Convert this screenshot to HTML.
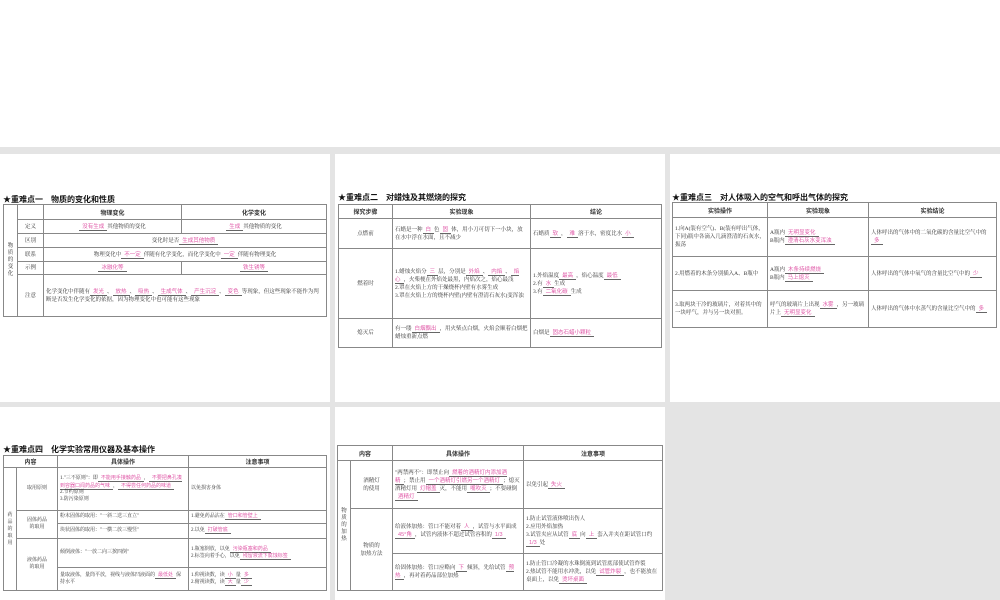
<!DOCTYPE html>
<html><head><meta charset="utf-8"><style>
html,body{margin:0;width:1000px;height:600px;overflow:hidden}
#w{position:relative;width:1000px;height:600px;overflow:hidden;background:#e4e4e4;font-family:"Liberation Serif","Noto Serif CJK SC","Noto Sans CJK SC",serif;color:#333}
.p{position:absolute;background:#fff}
.t{position:absolute;font:bold 8px "Liberation Sans","Noto Sans CJK SC",sans-serif;color:#111}
table{position:absolute;border-collapse:collapse;table-layout:fixed;font-size:5.5px;line-height:8px}
td{border:1px solid #888;padding:0 2px;vertical-align:middle;overflow:hidden}
th{border:1px solid #888;font:bold 6px "Liberation Sans","Noto Sans CJK SC",sans-serif;background:#fff}
table.o{border:1.5px solid #666}
.k{color:#e05aa8;border-bottom:0.6px solid #666;padding:0 3px;font-family:"Liberation Sans","Noto Sans CJK SC",sans-serif}
.c{text-align:center}
.v{text-align:center;line-height:7px}
table.s{font-size:5px;line-height:6.5px}
.clip{position:absolute;overflow:hidden}
</style></head><body><div id="w">
<div class="p" style="left:0;top:0;width:1000px;height:147px"></div>
<div class="p" style="left:0;top:154px;width:330px;height:248px"></div>
<div class="p" style="left:335px;top:154px;width:330px;height:248px"></div>
<div class="p" style="left:670px;top:154px;width:330px;height:248px"></div>
<div class="p" style="left:0;top:407px;width:330px;height:193px"></div>
<div class="p" style="left:335px;top:407px;width:330px;height:193px"></div>

<div class="t" style="left:3px;top:194px">★重难点一　物质的变化和性质</div>
<table class="o" style="left:3px;top:204px;width:324px">
<colgroup><col style="width:14px"><col style="width:26px"><col style="width:138px"><col></colgroup>
<tr style="height:15px"><td rowspan="6" class="v" style="padding:0">物<br>质<br>的<br>变<br>化</td><td></td><th>物理变化</th><th>化学变化</th></tr>
<tr style="height:14px"><td class="c">定义</td><td class="c"><span class="k">没有生成</span>其他物质的变化</td><td class="c"><span class="k">生成</span>其他物质的变化</td></tr>
<tr style="height:14px"><td class="c">区别</td><td colspan="2" class="c">变化时是否<span class="k">生成其他物质</span></td></tr>
<tr style="height:14px"><td class="c">联系</td><td colspan="2" class="c">物理变化中<span class="k">不一定</span>伴随有化学变化，而化学变化中<span class="k">一定</span>伴随有物理变化</td></tr>
<tr style="height:13px"><td class="c">示例</td><td class="c"><span class="k">冰融化等</span></td><td class="c"><span class="k">铁生锈等</span></td></tr>
<tr style="height:42px"><td class="c">注意</td><td colspan="2">化学变化中伴随有<span class="k">发光</span>、<span class="k">放热</span>、<span class="k">吸热</span>、<span class="k">生成气体</span>、<span class="k">产生沉淀</span>、<span class="k">变色</span>等现象，但这些现象不能作为判断是否发生化学变化的依据，因为物理变化中也可能有这些现象</td></tr>
</table>

<div class="t" style="left:338px;top:192px">★重难点二　对蜡烛及其燃烧的探究</div>
<table class="o" style="left:338px;top:204px;width:324px">
<colgroup><col style="width:54px"><col style="width:138px"><col></colgroup>
<tr style="height:14px"><th>探究步骤</th><th>实验现象</th><th>结论</th></tr>
<tr style="height:30px"><td class="c">点燃前</td><td>石蜡是一种<span class="k">白</span>色<span class="k">固</span>体，用小刀可切下一小块，放在水中浮在水面，且不减少</td><td>石蜡质<span class="k">软</span>，<span class="k">难</span>溶于水，密度比水<span class="k">小</span></td></tr>
<tr style="height:70px"><td class="c">燃着时</td><td>1.蜡烛火焰分<span class="k">三</span>层，分别是<span class="k">外焰</span>、<span class="k">内焰</span>、<span class="k">焰心</span>，火柴梗在外焰处最黑，内焰次之，焰心最浅<br>2.罩在火焰上方的干燥烧杯内壁有水雾生成<br>3.罩在火焰上方的烧杯内壁(内壁有澄清石灰水)变浑浊</td><td>1.外焰温度<span class="k">最高</span>，焰心温度<span class="k">最低</span><br>2.有<span class="k">水</span>生成<br>3.有<span class="k">二氧化碳</span>生成</td></tr>
<tr style="height:29px"><td class="c">熄灭后</td><td>有一缕<span class="k">白烟飘出</span>，用火柴点白烟，火焰会顺着白烟把蜡烛重新点燃</td><td>白烟是<span class="k">固态石蜡小颗粒</span></td></tr>
</table>

<div class="t" style="left:672px;top:192px">★重难点三　对人体吸入的空气和呼出气体的探究</div>
<table class="o" style="left:672px;top:202px;width:325px">
<colgroup><col style="width:95px"><col style="width:101px"><col></colgroup>
<tr style="height:15px"><th>实验操作</th><th>实验现象</th><th>实验结论</th></tr>
<tr style="height:39px"><td>1.向A(装有空气)、B(装有呼出气体，下同)瓶中各滴入几滴澄清的石灰水，振荡</td><td>A瓶内<span class="k">无明显变化</span><br>B瓶内<span class="k">澄清石灰水变浑浊</span></td><td>人体呼出的气体中的二氧化碳的含量比空气中的<span class="k">多</span></td></tr>
<tr style="height:34px"><td>2.用燃着的木条分别插入A、B瓶中</td><td>A瓶内<span class="k">木条持续燃烧</span><br>B瓶内<span class="k">马上熄灭</span></td><td>人体呼出的气体中氧气的含量比空气中的<span class="k">少</span></td></tr>
<tr style="height:37px"><td>3.取两块干冷的玻璃片，对着其中的一块呼气，并与另一块对照。</td><td>呼气的玻璃片上出现<span class="k">水雾</span>，另一玻璃片上<span class="k">无明显变化</span></td><td>人体呼出的气体中水蒸气的含量比空气中的<span class="k">多</span></td></tr>
</table>

<div class="t" style="left:3px;top:444px">★重难点四　化学实验常用仪器及基本操作</div>
<div class="clip" style="left:0;top:454px;width:330px;height:146px">
<table class="o s" style="left:3px;top:1px;width:324px">
<colgroup><col style="width:13px"><col style="width:41px"><col style="width:131px"><col></colgroup>
<tr style="height:12px"><th colspan="2">内容</th><th>具体操作</th><th>注意事项</th></tr>
<tr style="height:43px"><td rowspan="5" class="v" style="padding:0">药<br>品<br>的<br>取<br>用</td><td class="c">取用原则</td><td>1."三不原则"：即<span class="k">不能用手接触药品</span>，<span class="k">不要把鼻孔凑到容器口闻药品的气味</span>，<span class="k">不得尝任何药品的味道</span><br>2.节约原则<br>3.防污染原则</td><td>以免损害身体</td></tr>
<tr style="height:13px"><td rowspan="2" class="c">固体药品<br>的取用</td><td>粉末固体的取用："一斜二送三直立"</td><td>1.避免药品沾在<span class="k">管口和管壁上</span></td></tr>
<tr style="height:15px"><td>块状固体的取用："一横二放三慢竖"</td><td>2.以免<span class="k">打破管底</span></td></tr>
<tr style="height:29px"><td rowspan="2" class="c">液体药品<br>的取用</td><td>倾倒液体："一放二向三挨四倒"</td><td>1.瓶塞倒放，以免<span class="k">污染瓶塞和药品</span><br>2.标签向着手心，以免<span class="k">残留液流下腐蚀标签</span></td></tr>
<tr style="height:23px"><td>量取液体，量筒平放，视线与液体凹液面的<span class="k">最低处</span>保持水平</td><td>1.仰视读数，读<span class="k">小</span>量<span class="k">多</span><br>2.俯视读数，读<span class="k">大</span>量<span class="k">少</span></td></tr>
</table>
</div>

<table class="o" style="left:337px;top:445px;width:326px">
<colgroup><col style="width:13px"><col style="width:42px"><col style="width:131px"><col></colgroup>
<tr style="height:15px"><th colspan="2">内容</th><th>具体操作</th><th>注意事项</th></tr>
<tr style="height:48px"><td rowspan="3" class="v" style="padding:0">物<br>质<br>的<br>加<br>热</td><td class="c">酒精灯<br>的使用</td><td>"两禁两不"：即禁止向<span class="k">燃着的酒精灯内添加酒精</span>；禁止用<span class="k">一个酒精灯引燃另一个酒精灯</span>；熄灭酒精灯用<span class="k">灯帽盖</span>灭，不能用<span class="k">嘴吹灭</span>；不要碰倒<span class="k">酒精灯</span></td><td>以免引起<span class="k">失火</span></td></tr>
<tr style="height:45px"><td rowspan="2" class="c">物质的<br>加热方法</td><td>给液体加热：管口不能对着<span class="k">人</span>，试管与水平面成<span class="k">45°角</span>，试管内液体不超过试管容积的<span class="k">1/3</span></td><td>1.防止试管液体喷出伤人<br>2.应用外焰加热<br>3.试管夹应从试管<span class="k">底</span>向<span class="k">上</span>套入并夹在距试管口约<span class="k">1/3</span>处</td></tr>
<tr style="height:37px"><td>给固体加热：管口应略向<span class="k">下</span>倾斜，先给试管<span class="k">预热</span>，再对着药品部位加热</td><td>1.防止管口冷凝的水珠倒流到试管底部使试管炸裂<br>2.热试管不能用水冲洗，以免<span class="k">试管炸裂</span>，也不能放在桌面上，以免<span class="k">烫坏桌面</span></td></tr>
</table>
</div></body></html>
